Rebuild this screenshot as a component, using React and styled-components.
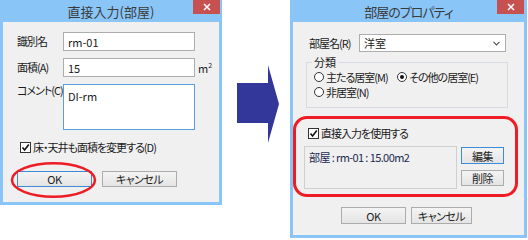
import React from "react";
import styled, { createGlobalStyle } from "styled-components";

const GlobalStyle = createGlobalStyle`
  body {
    margin: 0;
    background: #fff;
    font-family: "Noto Sans CJK JP", "Noto Sans", sans-serif;
    font-feature-settings: "palt";
    color: #1a1a1a;
  }
`;

const Page = styled.div`
  display: flex;
  align-items: flex-start;
  width: 528px;
  height: 240px;
  overflow: hidden;
  background: #fff;
`;

const Dialog = styled.div`
  position: relative;
  display: flex;
  flex-direction: column;
  flex-shrink: 0;
  box-sizing: border-box;
  width: ${(p) => p.$w}px;
  height: ${(p) => p.$h}px;
  padding: 0 3px 3px;
  background: #89c5f7;
`;

const TitleBar = styled.div`
  display: flex;
  align-items: center;
  justify-content: center;
  flex-shrink: 0;
  height: 22px;
  font-size: 13px;
  letter-spacing: ${(p) => p.$ls || 0}px;
  color: #3a3a3a;
`;

const CloseButton = styled.div`
  position: absolute;
  top: 0;
  right: ${(p) => p.$r}px;
  display: flex;
  align-items: center;
  justify-content: center;
  width: 27px;
  height: 14px;
  background: #c75050;
`;

const Body = styled.div`
  display: flex;
  flex: 1;
  flex-direction: column;
  box-sizing: border-box;
  padding: ${(p) => p.$pad};
  background: #f0f0f0;
  letter-spacing: -1px;
`;

const FormGrid = styled.div`
  display: grid;
  grid-template-columns: 46px 132px auto;
  grid-template-rows: 19px 19px 46px;
  row-gap: 7px;
  align-items: center;
`;

const Label = styled.span`
  align-self: ${(p) => (p.$top ? "start" : "center")};
  width: ${(p) => (p.$w ? `${p.$w}px` : "auto")};
  flex-shrink: 0;
  font-size: 11px;
  line-height: 13px;
  white-space: nowrap;
`;

const TextBox = styled.div`
  display: flex;
  align-items: ${(p) => (p.$multi ? "flex-start" : "center")};
  box-sizing: border-box;
  height: 100%;
  padding: ${(p) => (p.$multi ? "3px 4px" : "0 4px")};
  border: 1px solid ${(p) => (p.$focus ? "#5b9ee0" : "#adadad")};
  background: #fff;
  font-size: 11px;
  letter-spacing: 0;
`;

const Unit = styled.span`
  padding-left: 3px;
  font-size: 11px;
  letter-spacing: 0;

  sup {
    font-size: 7px;
  }
`;

const CheckRow = styled.div`
  display: flex;
  align-items: center;
  gap: 2px;
  height: 14px;
  margin: ${(p) => p.$m};
  font-size: 11px;
  white-space: nowrap;
`;

const Box = styled.span`
  display: flex;
  align-items: center;
  justify-content: center;
  box-sizing: border-box;
  width: 11px;
  height: 11px;
  border: 1px solid #333;
  background: #fff;
`;

const ButtonRow = styled.div`
  display: flex;
  gap: ${(p) => p.$gap}px;
  margin: ${(p) => p.$m};
  padding-left: ${(p) => p.$pl || 0}px;
`;

const Button = styled.div`
  position: relative;
  display: flex;
  align-items: center;
  justify-content: center;
  box-sizing: border-box;
  width: ${(p) => p.$w}px;
  height: ${(p) => p.$h}px;
  border: 1px solid ${(p) => (p.$def ? "#3c8ad8" : "#acacac")};
  background: linear-gradient(#f4f4f4, #e4e4e4);
  font-size: 11px;
  letter-spacing: -0.5px;
  color: #222;
`;

const Mark = styled.svg`
  position: absolute;
  left: -7px;
  top: -10px;
  overflow: visible;
  pointer-events: none;
`;

const ArrowCol = styled.div`
  flex-shrink: 0;
  width: 68px;
  height: 240px;
`;

const NameRow = styled.div`
  display: flex;
  align-items: center;
  height: 18px;
`;

const Select = styled.div`
  display: flex;
  align-items: center;
  justify-content: space-between;
  box-sizing: border-box;
  width: 147px;
  height: 18px;
  padding: 0 5px 0 4px;
  border: 1px solid #adadad;
  background: #fff;
  font-size: 11px;
  letter-spacing: 0;
`;

const GroupBox = styled.div`
  position: relative;
  display: flex;
  flex-direction: column;
  gap: 1px;
  box-sizing: border-box;
  width: 202px;
  height: 46px;
  margin: 10px 0 0 -3px;
  padding: 7px 0 0 7px;
  border: 1px solid #d5dbe0;
`;

const GroupTitle = styled.span`
  position: absolute;
  top: -8px;
  left: 5px;
  padding: 0 2px;
  background: #f0f0f0;
  font-size: 11px;
  line-height: 14px;
  letter-spacing: 0;
`;

const RadioRow = styled.div`
  display: flex;
  align-items: center;
  height: 14px;
`;

const RadioItem = styled.div`
  display: flex;
  align-items: center;
  gap: 2px;
  width: ${(p) => (p.$w ? `${p.$w}px` : "auto")};
  font-size: 11px;
  white-space: nowrap;
`;

const Radio = styled.span`
  display: flex;
  align-items: center;
  justify-content: center;
  box-sizing: border-box;
  width: 10px;
  height: 10px;
  border: 1px solid #333;
  border-radius: 50%;
  background: #fff;

  &::after {
    content: "";
    display: ${(p) => (p.$on ? "block" : "none")};
    width: 4px;
    height: 4px;
    border-radius: 50%;
    background: #111;
  }
`;

const RedSection = styled.div`
  display: flex;
  flex-direction: column;
  box-sizing: border-box;
  width: 225px;
  height: 81px;
  margin: 8px 0 0 -16px;
  padding: 7px 0 0 8px;
  border: 3px solid #ee1c24;
  border-radius: 14px;
`;

const InfoRow = styled.div`
  display: flex;
  gap: 4px;
  margin-top: 6px;
`;

const Static = styled.div`
  box-sizing: border-box;
  width: 153px;
  height: 43px;
  padding: 2px 4px;
  border: 1px solid #cfcfcf;
  font-size: 11px;
  letter-spacing: -0.6px;
  color: #1c2a50;
`;

const SideButtons = styled.div`
  display: flex;
  flex-direction: column;
  gap: 6px;
  padding-top: 1px;
`;

const CloseX = () => (
  <svg width="8" height="8" viewBox="0 0 8 8">
    <path d="M1 1 L7 7 M7 1 L1 7" stroke="#fff" strokeWidth="1.5" />
  </svg>
);

const Check = () => (
  <svg width="9" height="9" viewBox="0 0 9 9">
    <path d="M1.5 4.5 L3.6 7 L7.8 1.5" fill="none" stroke="#111" strokeWidth="1.6" />
  </svg>
);

const LeftDialog = () => (
  <Dialog $w={222} $h={205}>
    <TitleBar>直接入力(部屋)</TitleBar>
    <CloseButton $r={2}>
      <CloseX />
    </CloseButton>
    <Body $pad="10px 0 0 14px">
      <FormGrid>
        <Label>識別名</Label>
        <TextBox>rm-01</TextBox>
        <span />
        <Label>面積(A)</Label>
        <TextBox>15</TextBox>
        <Unit>
          m<sup>2</sup>
        </Unit>
        <Label $top>コメント(C)</Label>
        <TextBox $multi $focus>
          DI-rm
        </TextBox>
        <span />
      </FormGrid>
      <CheckRow $m="10px 0 0 3px">
        <Box>
          <Check />
        </Box>
        床・天井も面積を変更する(D)
      </CheckRow>
      <ButtonRow $gap={10} $m="17px 0 0 0">
        <Button $w={75} $h={16} $def>
          OK
          <Mark width="85" height="36" viewBox="0 0 85 36">
            <ellipse cx="42.5" cy="18" rx="41.5" ry="16.8" fill="none" stroke="#ee1c24" strokeWidth="2.5" />
          </Mark>
        </Button>
        <Button $w={75} $h={16}>
          キャンセル
        </Button>
      </ButtonRow>
    </Body>
  </Dialog>
);

const Arrow = () => (
  <ArrowCol>
    <svg width="68" height="240" viewBox="0 0 68 240">
      <polygon points="15,83 46,83 46,65 57,104 46,143 46,123 15,123" fill="#33379a" />
    </svg>
  </ArrowCol>
);

const RightDialog = () => (
  <Dialog $w={237} $h={238}>
    <TitleBar $ls={-1}>部屋のプロパティ</TitleBar>
    <CloseButton $r={3}>
      <CloseX />
    </CloseButton>
    <Body $pad="12px 0 0 16px">
      <NameRow>
        <Label $w={50}>部屋名(R)</Label>
        <Select>
          洋室
          <svg width="7" height="5" viewBox="0 0 7 5">
            <path d="M0.5 0.8 L3.5 3.8 L6.5 0.8" fill="none" stroke="#555" strokeWidth="1.2" />
          </svg>
        </Select>
      </NameRow>
      <GroupBox>
        <GroupTitle>分類</GroupTitle>
        <RadioRow>
          <RadioItem $w={83}>
            <Radio />
            主たる居室(M)
          </RadioItem>
          <RadioItem>
            <Radio $on />
            その他の居室(E)
          </RadioItem>
        </RadioRow>
        <RadioRow>
          <RadioItem>
            <Radio />
            非居室(N)
          </RadioItem>
        </RadioRow>
      </GroupBox>
      <RedSection>
        <CheckRow $m="0 0 0 4px">
          <Box>
            <Check />
          </Box>
          直接入力を使用する
        </CheckRow>
        <InfoRow>
          <Static>部屋 : rm-01 : 15.00m2</Static>
          <SideButtons>
            <Button $w={43} $h={17} $def>
              編集
            </Button>
            <Button $w={43} $h={16}>
              削除
            </Button>
          </SideButtons>
        </InfoRow>
      </RedSection>
      <ButtonRow $gap={5} $m="10px 0 0 -16px" $pl={48}>
        <Button $w={65} $h={17}>
          OK
        </Button>
        <Button $w={61} $h={17}>
          キャンセル
        </Button>
      </ButtonRow>
    </Body>
  </Dialog>
);

export default function App() {
  return (
    <>
      <GlobalStyle />
      <Page>
        <LeftDialog />
        <Arrow />
        <RightDialog />
      </Page>
    </>
  );
}
